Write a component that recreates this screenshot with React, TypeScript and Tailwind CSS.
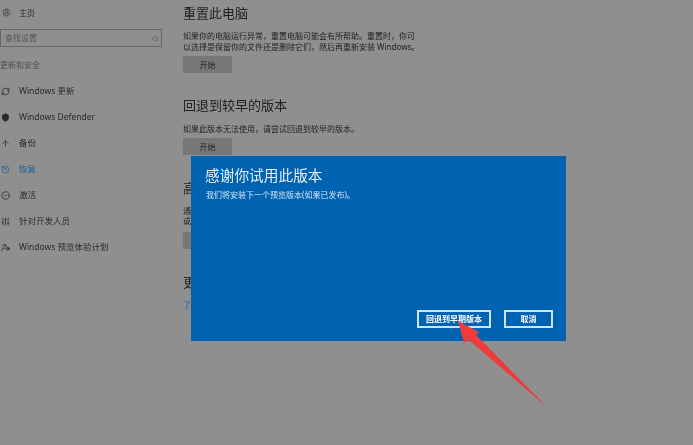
import { ArrowUp, CircleCheck, History, RefreshCw, Search, Settings, ShieldCheck, SlidersVertical, UserCog } from 'lucide-react';

const fuente = { fontFamily: '"Noto Sans", "Noto Sans CJK SC", sans-serif' };

const elementos = [
  { texto: 'Windows 更新', Icono: RefreshCw },
  { texto: 'Windows Defender', Icono: ShieldCheck, relleno: true },
  { texto: '备份', Icono: ArrowUp },
  { texto: '恢复', Icono: History, activo: true },
  { texto: '激活', Icono: CircleCheck },
  { texto: '针对开发人员', Icono: SlidersVertical },
  { texto: 'Windows 预览体验计划', Icono: UserCog },
];

function Boton({ texto }: { texto?: string }) {
  return (
    <div className="w-[49px] h-[17px] bg-[#777777] flex items-center justify-center text-[8px] text-[#222222]">
      {texto}
    </div>
  );
}

export default function App() {
  return (
    <div
      className="relative w-[693px] h-[445px] overflow-hidden bg-[#8f8f8f] flex text-[#222222] blur-[0.3px]"
      style={fuente}
    >
      {/* barra lateral */}
      <div className="w-[183px] shrink-0 flex flex-col">
        <div className="h-[25px] flex items-center">
          <Settings className="w-[9px] h-[9px] ml-[2px] text-[#333333]" />
          <span className="ml-[8px] text-[8px] text-[#2a2a2a]">主页</span>
        </div>
        <div className="w-[162px] h-[18px] mt-[4px] border border-[#666666] flex items-center justify-between pl-[4px] pr-[2px]">
          <span className="text-[8px] text-[#555555]">查找设置</span>
          <Search className="w-[7px] h-[7px] text-[#555555]" />
        </div>
        <div className="h-[14px] mt-[11px] text-[8px] text-[#4f4f4f] flex items-center">更新和安全</div>
        <div className="mt-[6px] flex flex-col">
          {elementos.map(({ texto, Icono, relleno, activo }) => (
            <div key={texto} className={`h-[26px] flex items-center ${activo ? 'text-[#1f5f99]' : 'text-[#2a2a2a]'}`}>
              <Icono
                className="w-[9px] h-[9px] ml-[1px] shrink-0"
                fill={relleno ? 'currentColor' : 'none'}
              />
              <span className="ml-[9px] text-[8.5px] whitespace-nowrap">{texto}</span>
            </div>
          ))}
        </div>
      </div>

      {/* contenido */}
      <div className="flex-1 flex flex-col">
        <h2 className="mt-[4px] h-[18px] leading-[18px] text-[13px]">重置此电脑</h2>
        <p className="mt-[8px] text-[8px] leading-[11px] w-[238px]">
          如果你的电脑运行异常，重置电脑可能会有所帮助。重置时，你可以选择是保留你的文件还是删除它们，然后再重新安装 Windows。
        </p>
        <div className="mt-[4px]">
          <Boton texto="开始" />
        </div>
        <h2 className="mt-[23px] h-[18px] leading-[18px] text-[13px]">回退到较早的版本</h2>
        <p className="mt-[9px] text-[8px] leading-[11px]">如果此版本无法使用，请尝试回退到较早的版本。</p>
        <div className="mt-[4px]">
          <Boton texto="开始" />
        </div>
        {/* lo demas queda tapado por el dialogo */}
        <h2 className="mt-[24px] h-[18px] leading-[18px] text-[13px]">高</h2>
        <p className="mt-[9px] text-[8px] leading-[10px]">
          通
          <br />
          或
        </p>
        <div className="mt-[6px]">
          <Boton />
        </div>
        <h2 className="mt-[24px] h-[18px] leading-[18px] text-[13px]">更</h2>
        <p className="mt-[8px] text-[8px] leading-[11px] text-[#2f5f8a]">了</p>
      </div>

      {/* dialogo */}
      <div className="absolute left-[191px] top-[156px] w-[375px] h-[185px] bg-[#0063b1] text-white flex flex-col">
        <h1 className="ml-[14px] mt-[8px] h-[22px] leading-[22px] text-[14.7px] text-[#e6eff7]">感谢你试用此版本</h1>
        <p className="ml-[15px] mt-[3px] text-[8px] leading-[12px] text-[#d5e4f2]">我们将安装下一个预览版本(如果已发布)。</p>
        <div className="mt-auto mb-[13px] mr-[13px] flex justify-end gap-[13px]">
          <div className="w-[74px] h-[18px] border-2 border-[#cfe2f2] flex items-center justify-center text-[8px] font-bold">
            回退到早期版本
          </div>
          <div className="w-[49px] h-[18px] border-2 border-[#cfe2f2] flex items-center justify-center text-[8px] font-bold">
            取消
          </div>
        </div>
      </div>

      {/* flecha */}
      <svg className="absolute left-0 top-0" width="693" height="445" viewBox="0 0 693 445">
        <path d="M458 321 L479 332 L476 335 L548 408 L469 340 L464 343 Z" fill="#ee3b3b" />
      </svg>
    </div>
  );
}
